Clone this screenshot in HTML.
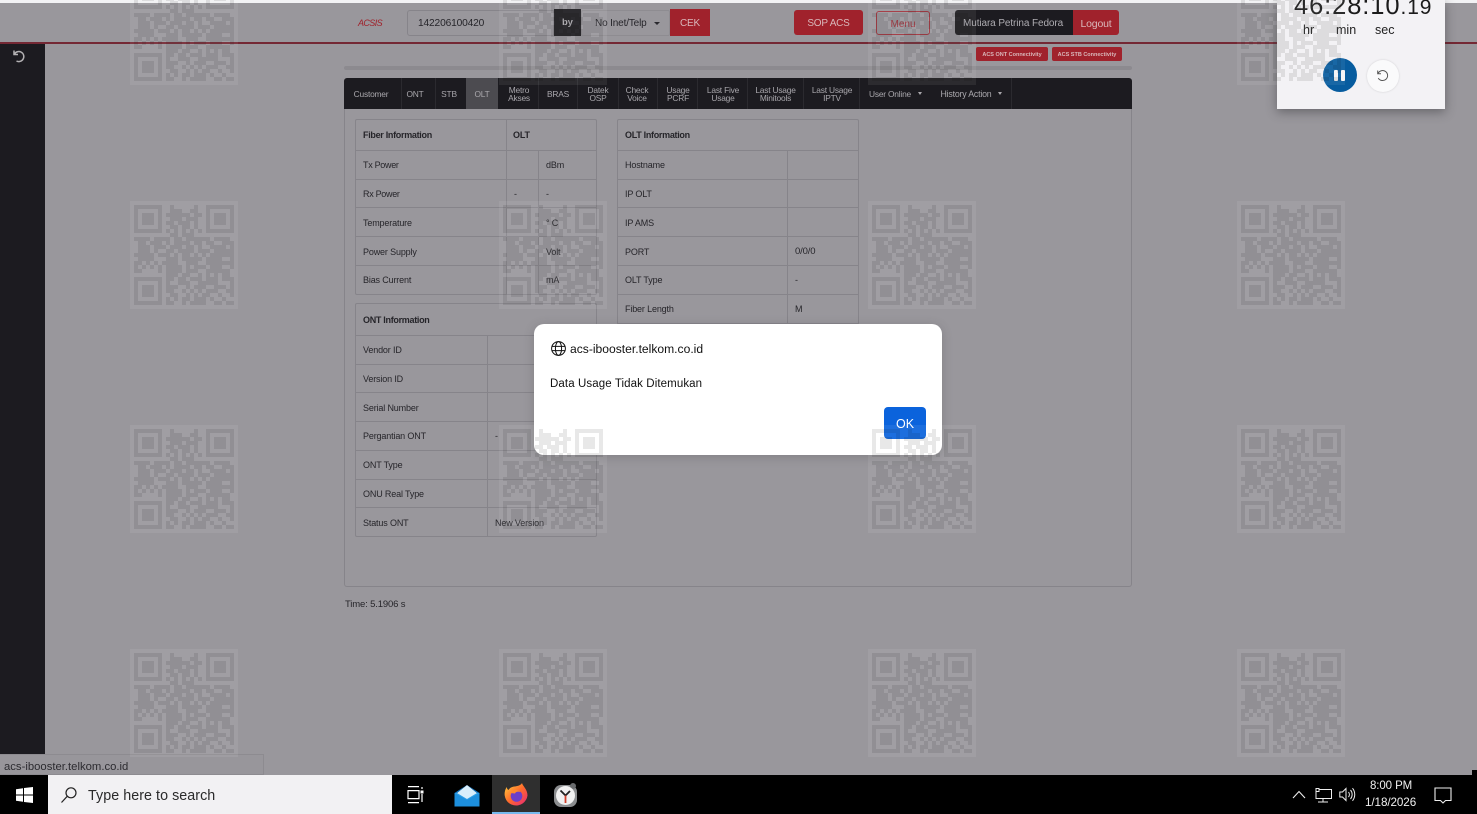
<!DOCTYPE html>
<html lang="en"><head><meta charset="utf-8"><title>ACSIS</title>
<style>
html,body{margin:0;padding:0;width:1477px;height:814px;overflow:hidden;background:#99979c}
body{position:relative;font-family:"Liberation Sans",sans-serif;color:#201f24}
.a{position:absolute}
.t{position:absolute;white-space:nowrap;font-size:9px;line-height:12px;letter-spacing:-.15px;color:#26252a}
.b{font-weight:bold}
.n{color:#a9a7ac;text-align:center;line-height:8px;font-size:8.4px;transform:translateX(-50%);letter-spacing:-.2px}
.h{position:absolute;height:1px;background:#86848a}
.v{position:absolute;width:1px;background:#86848a}
.s{position:absolute;width:1px;top:78px;height:31px;background:#2b2a2f}
.box{position:absolute;border:1px solid #86848a;border-radius:2px;box-sizing:border-box}
.r{position:absolute;background:#a0222c;border-radius:2px;color:#d9b8bb;text-align:center;font-size:10px;letter-spacing:-.2px}
</style></head><body>

<div class="a" style="left:0;top:0;width:1477px;height:3px;background:#f2f2f4"></div>
<div class="a" style="left:0;top:42px;width:1477px;height:2px;background:#742834"></div>
<div class="a" style="left:0;top:44px;width:45px;height:711px;background:#1c1b20"></div>
<svg class="a" style="left:12px;top:49px" width="14" height="14" viewBox="0 0 14 14" fill="none" stroke="#b3b1b3" stroke-width="1.5"><path d="M2 1.500v4h4M2.400 5.200A5 5 0 1 1 4.500 12"/></svg>

<!-- header -->
<div class="t" style="left:358px;top:17px;color:#a0222c;font-style:italic;letter-spacing:-.6px">ACSIS</div>
<div class="box" style="left:407px;top:10px;width:147px;height:26px;border-radius:3px 0 0 3px"></div>
<div class="t" style="left:418px;top:18px;font-size:10.200px">142206100420</div>
<div class="a" style="left:554px;top:9px;width:27px;height:27px;background:#1c1b20"></div>
<div class="t b" style="left:562px;top:17px;color:#a9a7ac;font-size:9.500px">by</div>
<div class="box" style="left:581px;top:10px;width:89px;height:26px;border-color:#8e8c91"></div>
<div class="t" style="left:595px;top:18px;font-size:10px">No Inet/Telp</div>
<div class="a" style="left:654px;top:22px;border:3px solid transparent;border-top:3px solid #2a292e"></div>
<div class="r" style="left:670px;top:9px;width:40px;height:27px;line-height:29px;border-radius:0">CEK</div>
<div class="r" style="left:794px;top:10px;width:69px;height:25px;line-height:28px;border-radius:3px">SOP ACS</div>
<div class="a" style="left:876px;top:11px;width:54px;height:24px;box-sizing:border-box;border:1px solid #a0323c;border-radius:3px;color:#a0323c;font-size:10px;line-height:25px;text-align:center">Menu</div>
<div class="a" style="left:955px;top:10px;width:118px;height:25px;background:#1c1b20;border-radius:3px 0 0 3px"></div>
<div class="t" style="left:963px;top:18px;color:#aeacb1;font-size:10px;letter-spacing:-.1px">Mutiara Petrina Fedora</div>
<div class="r" style="left:1073px;top:10px;width:46px;height:25px;line-height:28px;border-radius:0 3px 3px 0;font-size:10.500px">Logout</div>
<div class="r" style="left:976px;top:47px;width:72px;height:14px;line-height:17px;font-size:5.500px;letter-spacing:0;font-weight:bold">ACS ONT Connectivity</div>
<div class="r" style="left:1052px;top:47px;width:70px;height:14px;line-height:17px;font-size:5.500px;letter-spacing:0;font-weight:bold">ACS STB Connectivity</div>
<div class="a" style="left:344px;top:66px;width:788px;height:4px;background:#8c8a8f;border-radius:2px"></div>

<!-- nav -->
<div class="a" style="left:344px;top:78px;width:788px;height:31px;background:#1c1b20;border-radius:3px 3px 0 0"></div>
<div class="a" style="left:466px;top:78px;width:32px;height:31px;background:#4c4b50"></div>
<div class="s" style="left:401px"></div><div class="s" style="left:435px"></div><div class="s" style="left:538px"></div><div class="s" style="left:577px"></div><div class="s" style="left:618px"></div><div class="s" style="left:657px"></div><div class="s" style="left:697px"></div><div class="s" style="left:747px"></div><div class="s" style="left:803px"></div><div class="s" style="left:859px"></div><div class="s" style="left:1011px"></div>
<div class="t n" style="left:371px;top:90px">Customer</div>
<div class="t n" style="left:415px;top:90px">ONT</div>
<div class="t n" style="left:449px;top:90px">STB</div>
<div class="t n" style="left:482px;top:90px">OLT</div>
<div class="t n" style="left:519px;top:86px">Metro<br>Akses</div>
<div class="t n" style="left:558px;top:90px">BRAS</div>
<div class="t n" style="left:598px;top:86px">Datek<br>OSP</div>
<div class="t n" style="left:637px;top:86px">Check<br>Voice</div>
<div class="t n" style="left:678px;top:86px">Usage<br>PCRF</div>
<div class="t n" style="left:723px;top:86px">Last Five<br>Usage</div>
<div class="t n" style="left:775.500px;top:86px">Last Usage<br>Minitools</div>
<div class="t n" style="left:832px;top:86px">Last Usage<br>IPTV</div>
<div class="t n" style="left:890px;top:90px">User Online</div>
<div class="a" style="left:918px;top:92px;border:2.500px solid transparent;border-top:3px solid #a9a7ac"></div>
<div class="t n" style="left:966px;top:90px;font-size:8.800px">History Action</div>
<div class="a" style="left:998px;top:92px;border:2.500px solid transparent;border-top:3px solid #a9a7ac"></div>

<!-- outer panel -->
<div class="a" style="left:344px;top:109px;width:788px;height:478px;box-sizing:border-box;border:1px solid #86848a;border-top:0;border-radius:0 0 3px 3px"></div>
<div class="t" style="left:345px;top:599px;font-size:9.500px">Time: 5.1906 s</div>

<!-- Fiber -->
<div class="box" style="left:355px;top:119px;width:242px;height:176px"></div>
<div class="h" style="left:355px;top:150px;width:242px"></div>
<div class="h" style="left:355px;top:179px;width:242px"></div>
<div class="h" style="left:355px;top:207px;width:242px"></div>
<div class="h" style="left:355px;top:236px;width:242px"></div>
<div class="h" style="left:355px;top:265px;width:242px"></div>
<div class="v" style="left:506px;top:119px;height:176px"></div>
<div class="v" style="left:538px;top:151px;height:144px"></div>
<div class="t b" style="left:363px;top:129px;letter-spacing:-.3px">Fiber Information</div>
<div class="t b" style="left:513px;top:129px">OLT</div>
<div class="t" style="left:363px;top:159px;letter-spacing:-.3px">Tx Power</div><div class="t" style="left:546px;top:159px">dBm</div>
<div class="t" style="left:363px;top:188px;letter-spacing:-.3px">Rx Power</div><div class="t" style="left:514px;top:188px">-</div><div class="t" style="left:546px;top:188px">-</div>
<div class="t" style="left:363px;top:217px">Temperature</div><div class="t" style="left:546px;top:217px">° C</div>
<div class="t" style="left:363px;top:246px">Power Supply</div><div class="t" style="left:546px;top:246px">Volt</div>
<div class="t" style="left:363px;top:274px">Bias Current</div><div class="t" style="left:546px;top:274px">mA</div>

<!-- OLT -->
<div class="box" style="left:617px;top:119px;width:242px;height:230px"></div>
<div class="h" style="left:617px;top:150px;width:242px"></div>
<div class="h" style="left:617px;top:179px;width:242px"></div>
<div class="h" style="left:617px;top:207px;width:242px"></div>
<div class="h" style="left:617px;top:236px;width:242px"></div>
<div class="h" style="left:617px;top:265px;width:242px"></div>
<div class="h" style="left:617px;top:294px;width:242px"></div>
<div class="h" style="left:617px;top:323px;width:242px"></div>
<div class="v" style="left:787px;top:151px;height:198px"></div>
<div class="t b" style="left:625px;top:129px;letter-spacing:-.3px">OLT Information</div>
<div class="t" style="left:625px;top:159px">Hostname</div>
<div class="t" style="left:625px;top:188px">IP OLT</div>
<div class="t" style="left:625px;top:217px">IP AMS</div>
<div class="t" style="left:625px;top:246px">PORT</div><div class="t" style="left:795px;top:246px;font-size:9.500px">0/0/0</div>
<div class="t" style="left:625px;top:274px">OLT Type</div><div class="t" style="left:795px;top:274px">-</div>
<div class="t" style="left:625px;top:303px">Fiber Length</div><div class="t" style="left:795px;top:303px">M</div>

<!-- ONT -->
<div class="box" style="left:355px;top:303px;width:242px;height:234px"></div>
<div class="h" style="left:355px;top:335px;width:242px"></div>
<div class="h" style="left:355px;top:364px;width:242px"></div>
<div class="h" style="left:355px;top:392px;width:242px"></div>
<div class="h" style="left:355px;top:421px;width:242px"></div>
<div class="h" style="left:355px;top:450px;width:242px"></div>
<div class="h" style="left:355px;top:479px;width:242px"></div>
<div class="h" style="left:355px;top:507px;width:242px"></div>
<div class="v" style="left:487px;top:336px;height:201px"></div>
<div class="t b" style="left:363px;top:314px;letter-spacing:-.3px">ONT Information</div>
<div class="t" style="left:363px;top:344px">Vendor ID</div>
<div class="t" style="left:363px;top:373px">Version ID</div>
<div class="t" style="left:363px;top:402px">Serial Number</div>
<div class="t" style="left:363px;top:430px">Pergantian ONT</div><div class="t" style="left:495px;top:430px">-</div>
<div class="t" style="left:363px;top:459px">ONT Type</div>
<div class="t" style="left:363px;top:488px">ONU Real Type</div>
<div class="t" style="left:363px;top:517px">Status ONT</div><div class="t" style="left:495px;top:517px">New Version</div>

<!-- status -->
<div class="a" style="left:0;top:754px;width:264px;height:21px;box-sizing:border-box;background:#98969b;border:1px solid #8d8b90;border-left:0"></div>
<div class="t" style="left:4px;top:760px;font-size:11.300px;line-height:14px;letter-spacing:0;color:#2c2b30">acs-ibooster.telkom.co.id</div>

<!-- dialog -->
<div class="a" style="left:534px;top:324px;width:408px;height:131px;background:#fff;border-radius:10px;box-shadow:0 2px 10px rgba(60,60,65,.25);z-index:10"></div>
<svg class="a" style="left:551px;top:341px;z-index:11" width="15" height="15" viewBox="0 0 15 15" fill="none" stroke="#111" stroke-width="1"><circle cx="7.500" cy="7.500" r="6.900"/><ellipse cx="7.500" cy="7.500" rx="3.100" ry="6.900"/><path d="M1 5.400h13M1 9.600h13"/></svg>
<div class="t" style="left:570px;top:342px;z-index:11;font-size:12.100px;line-height:15px;letter-spacing:0;color:#111">acs-ibooster.telkom.co.id</div>
<div class="t" style="left:550px;top:377px;z-index:11;font-size:11.500px;line-height:15px;letter-spacing:.1px;color:#111">Data Usage Tidak Ditemukan</div>
<div class="a" style="left:884px;top:407px;width:42px;height:32px;background:#0b63dc;border-radius:4px;color:#fff;font-size:12.500px;line-height:34px;text-align:center;z-index:11">OK</div>

<!-- timer window -->
<div class="a" style="left:1277px;top:0;width:168px;height:109px;background:#f3f2f5;box-shadow:0 3px 10px rgba(40,40,45,.45);z-index:12;overflow:hidden">
  <div class="t" style="left:17px;top:-9px;font-size:25.500px;line-height:30px;letter-spacing:.9px;color:#1b1b1b">46:28:10<span style="font-size:21px">.19</span></div>
  <div class="t" style="left:26px;top:23px;font-size:12.500px;line-height:15px;letter-spacing:0;color:#222">hr</div>
  <div class="t" style="left:59px;top:23px;font-size:12.500px;line-height:15px;letter-spacing:0;color:#222">min</div>
  <div class="t" style="left:98px;top:23px;font-size:12.500px;line-height:15px;letter-spacing:0;color:#222">sec</div>
  <div class="a" style="left:46px;top:58px;width:34px;height:34px;border-radius:50%;background:#075c9f"></div>
  <div class="a" style="left:57px;top:70px;width:4px;height:11px;background:#f4f4f6;border-radius:1px"></div>
  <div class="a" style="left:64px;top:70px;width:4px;height:11px;background:#f4f4f6;border-radius:1px"></div>
  <div class="a" style="left:90px;top:60px;width:32px;height:32px;border-radius:50%;background:#fafafb;box-shadow:0 0 2px rgba(0,0,0,.15)"></div>
  <svg class="a" style="left:99px;top:69px" width="14" height="14" viewBox="0 0 14 14" fill="none" stroke="#555" stroke-width="1"><path d="M1.700 1.500v3.300H5M2 4.600a5 5 0 1 1 .3 4.500"/></svg>
</div>

<!-- watermark QR -->
<svg width="0" height="0" style="position:absolute"><defs>
<g id="qr">
<rect width="108" height="108" fill="#fff" fill-opacity=".07"/>
<path transform="translate(4 4) scale(4)" fill="none" stroke="#000" stroke-opacity=".09" stroke-width="1" shape-rendering="crispEdges" d="
M0 .5h7M9 .5h1M15 .5h1M18 .5h7
M0 1.500h1M6 1.500h1M9 1.500h3M14 1.500h2M18 1.500h1M24 1.500h1
M0 2.500h1M2 2.500h3M6 2.500h1M8 2.500h6M15 2.500h2M18 2.500h1M20 2.500h3M24 2.500h1
M0 3.500h1M2 3.500h3M6 3.500h1M9 3.500h3M13 3.500h3M18 3.500h1M20 3.500h3M24 3.500h1
M0 4.500h1M2 4.500h3M6 4.500h1M8 4.500h2M11 4.500h3M15 4.500h1M18 4.500h1M20 4.500h3M24 4.500h1
M0 5.500h1M6 5.500h1M9 5.500h2M12 5.500h2M15 5.500h1M18 5.500h1M24 5.500h1
M0 6.500h7M8 6.500h1M10 6.500h1M12 6.500h1M14 6.500h1M16 6.500h1M18 6.500h7
M9 7.500h2M12 7.500h3
M0 8.500h4M5 8.500h4M10 8.500h2M13 8.500h6M20 8.500h4
M1 9.500h2M4 9.500h3M8 9.500h1M10 9.500h4M15 9.500h2M18 9.500h2M22 9.500h3
M1 10.500h3M5 10.500h3M9 10.500h3M13 10.500h2M16 10.500h1M19 10.500h4M24 10.500h1
M1 11.500h3M5 11.500h1M8 11.500h2M11 11.500h4M16 11.500h3M20 11.500h5
M0 12.500h5M6 12.500h3M10 12.500h1M12 12.500h2M15 12.500h1M17 12.500h1M19 12.500h6
M1 13.500h4M8 13.500h3M12 13.500h5M18 13.500h4M24 13.500h1
M0 14.500h2M3 14.500h1M5 14.500h1M7 14.500h4M13 14.500h3M18 14.500h7
M0 15.500h1M2 15.500h1M4 15.500h1M6 15.500h1M8 15.500h4M13 15.500h1M15 15.500h3M19 15.500h3M24 15.500h1
M0 16.500h2M6 16.500h1M8 16.500h4M13 16.500h3M18 16.500h6
M8 17.500h3M12 17.500h2M16 17.500h1M18 17.500h1M20 17.500h1M22 17.500h2
M0 18.500h7M8 18.500h2M11 18.500h2M14 18.500h3M18 18.500h3M22 18.500h3
M0 19.500h1M6 19.500h1M8 19.500h1M11 19.500h3M16 19.500h5M24 19.500h1
M0 20.500h1M2 20.500h3M6 20.500h1M8 20.500h3M13 20.500h1M15 20.500h3M20 20.500h3M24 20.500h1
M0 21.500h1M2 21.500h3M6 21.500h1M8 21.500h2M12 21.500h1M14 21.500h1M16 21.500h1M18 21.500h3M23 21.500h2
M0 22.500h1M2 22.500h3M6 22.500h1M9 22.500h2M13 22.500h1M15 22.500h1M17 22.500h2M21 22.500h1M24 22.500h1
M0 23.500h1M6 23.500h1M8 23.500h1M10 23.500h1M12 23.500h2M15 23.500h3M19 23.500h1M22 23.500h1
M0 24.500h7M8 24.500h2M12 24.500h1M14 24.500h4M20 24.500h2M23 24.500h2"/>
</g></defs></svg>

<svg class="a" style="left:0;top:0;z-index:30;pointer-events:none" width="1477" height="775">
<use href="#qr" x="130" y="-23"/><use href="#qr" x="499" y="-23"/><use href="#qr" x="868" y="-23"/><use href="#qr" x="1237" y="-23"/>
<use href="#qr" x="130" y="201"/><use href="#qr" x="499" y="201"/><use href="#qr" x="868" y="201"/><use href="#qr" x="1237" y="201"/>
<use href="#qr" x="130" y="425"/><use href="#qr" x="499" y="425"/><use href="#qr" x="868" y="425"/><use href="#qr" x="1237" y="425"/>
<use href="#qr" x="130" y="649"/><use href="#qr" x="499" y="649"/><use href="#qr" x="868" y="649"/><use href="#qr" x="1237" y="649"/>
</svg>

<!-- taskbar -->
<div class="a" style="left:0;top:775px;width:1477px;height:39px;background:#000;z-index:40">
  <svg class="a" style="left:16px;top:12px" width="17" height="16" viewBox="0 0 17 16" fill="#fff"><path d="M0 2.300 7 1.200v6.300H0zM8 1 17 0v7.500H8zM0 8.500h7v6.300L0 13.700zM8 8.500h9V16L8 15z"/></svg>
  <div class="a" style="left:48px;top:0;width:344px;height:39px;background:#f2f1f3"></div>
  <svg class="a" style="left:60px;top:11px" width="18" height="18" viewBox="0 0 18 18" fill="none" stroke="#222" stroke-width="1.200"><circle cx="11" cy="6.800" r="5"/><path d="M7.200 10.300 1.500 16.500"/></svg>
  <div class="t" style="left:88px;top:13px;font-size:14.300px;line-height:17px;letter-spacing:.05px;color:#2a2a2a">Type here to search</div>
  <svg class="a" style="left:407px;top:11px" width="18" height="18" viewBox="0 0 18 18" fill="none" stroke="#fff" stroke-width="1.200"><path d="M1 .6h11M1 16.600h11M1 4.600h11v8H1zM15 1v2M15 8v8"/><rect x="13.500" y="4.500" width="3" height="3" fill="#fff" stroke="none"/></svg>
  <svg class="a" style="left:454px;top:9px" width="26" height="24" viewBox="0 0 26 24"><path d="M.5 9H25.500V22.500H.5z" fill="#2d9fe8"/><path d="M3 9 13 1l10 8-10 6z" fill="#d9eefb"/><path d="M13 1 .5 9 3 9z M13 1 25.500 9 23 9z" fill="#0f78c9"/><path d="M.5 9 13 16 25.500 9V22.500H.5z" fill="#1d8fdd"/></svg>
  <div class="a" style="left:492px;top:0;width:48px;height:39px;background:#2f2f2f"></div>
  <div class="a" style="left:492px;top:37px;width:48px;height:2px;background:#76b9ed"></div>
  <svg class="a" style="left:503px;top:7px" width="26" height="26" viewBox="0 0 26 26"><defs><linearGradient id="ff" x1="0" y1="0" x2="1" y2="1"><stop offset="0" stop-color="#ffd23f"/><stop offset=".5" stop-color="#ff6a2b"/><stop offset="1" stop-color="#e5247b"/></linearGradient></defs><path d="M19 1c.5 3 5.500 6 5.500 12.500A11.500 11.500 0 1 1 2 9c.3-1.500 1-3 1.800-4 0 1.500.8 2.500 1.700 3 1.500-2.500 4-3.500 6.500-3.500C15 4 18 3 19 1z" fill="url(#ff)"/><circle cx="13.500" cy="14" r="5.800" fill="#6b3fc9"/><path d="M7.500 11c2-3.500 7.500-4 10-1-3-.8-5 0-5.500 1.500z" fill="#ff8a2b"/></svg>
  <svg class="a" style="left:553px;top:7px" width="25" height="26" viewBox="0 0 25 26"><rect x="1" y="3" width="23" height="22" rx="7" fill="#8b8d8f"/><circle cx="20" cy="4" r="3" fill="#6a6c6e"/><circle cx="12.500" cy="13.500" r="9.500" fill="#f1f1f1"/><path d="M12.500 13.500 7.500 8.500M12.500 13.500 17 9" stroke="#222" stroke-width="1.800" fill="none"/><path d="M12.500 13.500V21" stroke="#d3402b" stroke-width="1.800" fill="none"/></svg>
  <svg class="a" style="left:1292px;top:15px" width="14" height="9" viewBox="0 0 14 9" fill="none" stroke="#eee" stroke-width="1.100"><path d="M1 8 7 1.500 13 8"/></svg>
  <svg class="a" style="left:1315px;top:12px" width="17" height="17" viewBox="0 0 17 17" fill="none" stroke="#eee" stroke-width="1"><path d="M1 1.500h3v3H1zM4 2.500h12.500v9H1V4.500M8 11.500v3.500M3 15h10"/></svg>
  <svg class="a" style="left:1339px;top:12px" width="17" height="15" viewBox="0 0 17 15" fill="none" stroke="#eee" stroke-width="1"><path d="M.8 5h2.700L7 1.500v12L3.500 10H.8zM9.500 5a4 4 0 0 1 0 5M11.500 3a7 7 0 0 1 0 9M13.500 1.200a10 10 0 0 1 0 12.600"/></svg>
  <div class="t" style="left:1370px;top:4px;font-size:11.500px;line-height:14px;letter-spacing:-.1px;color:#f0f0f0">8:00 PM</div>
  <div class="t" style="left:1365px;top:21px;font-size:11.700px;line-height:14px;letter-spacing:-.1px;color:#f0f0f0">1/18/2026</div>
  <svg class="a" style="left:1434px;top:12px" width="18" height="17" viewBox="0 0 18 17" fill="none" stroke="#eee" stroke-width="1.100"><path d="M1 1h16v12.500h-5.500L9 16l-2.500-2.500H1z"/></svg>
</div>
<div class="a" style="left:1472px;top:770px;width:5px;height:5px;background:#000;z-index:41"></div>
</body></html>
